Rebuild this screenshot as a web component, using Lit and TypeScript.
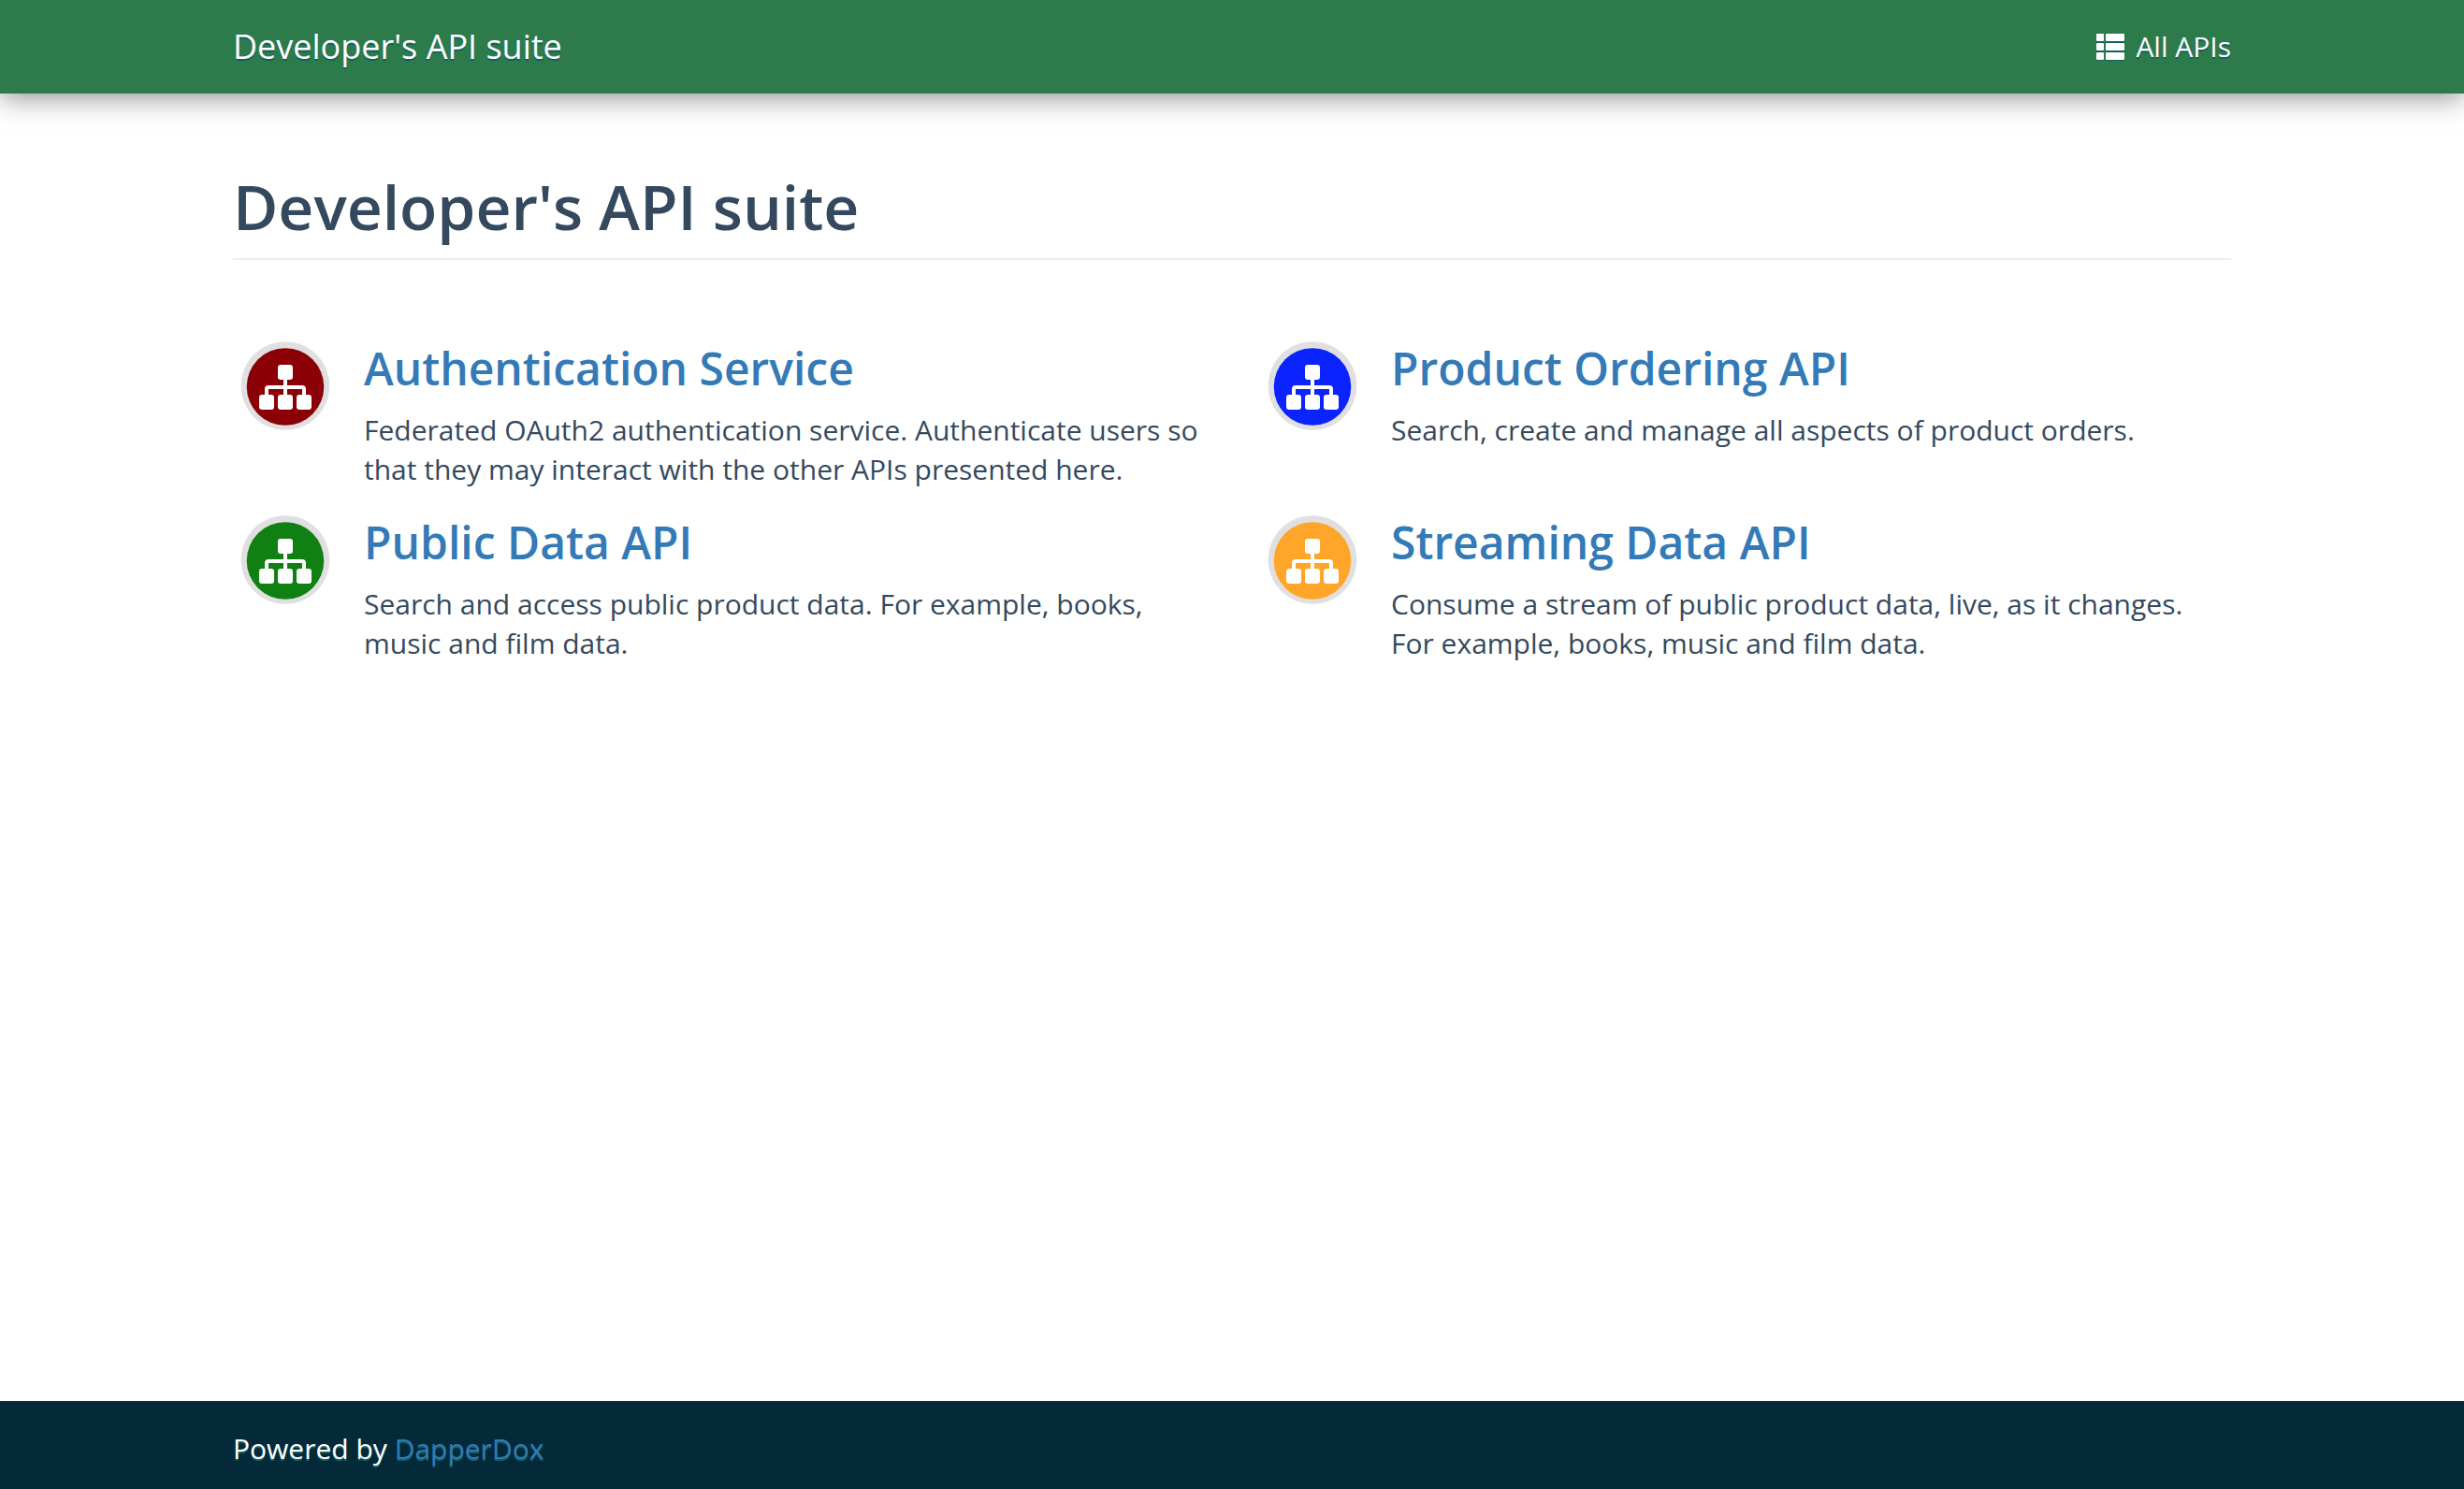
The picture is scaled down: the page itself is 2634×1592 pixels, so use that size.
import { LitElement, html, css, svg } from "lit";
import { customElement, property } from "lit/decorators.js";

interface ApiSummary {
  title: string;
  description: string;
  color: string;
}

const APIS: ApiSummary[] = [
  {
    title: "Authentication Service",
    description:
      "Federated OAuth2 authentication service. Authenticate users so that they may interact with the other APIs presented here.",
    color: "#8b0007",
  },
  {
    title: "Product Ordering API",
    description: "Search, create and manage all aspects of product orders.",
    color: "#0a23ff",
  },
  {
    title: "Public Data API",
    description: "Search and access public product data. For example, books, music and film data.",
    color: "#108012",
  },
  {
    title: "Streaming Data API",
    description:
      "Consume a stream of public product data, live, as it changes. For example, books, music and film data.",
    color: "#ffa529",
  },
];

@customElement("api-badge")
export class ApiBadge extends LitElement {
  @property() color = "#333333";

  static styles = css`
    :host {
      display: block;
    }
    .badge {
      display: block;
      width: 96px;
      height: 96px;
    }
  `;

  render() {
    return html`
      <svg class="badge" viewBox="0 0 96 96" aria-hidden="true">
        <circle cx="48" cy="47.5" r="47.3" fill="#e0e0e0" />
        <circle cx="48" cy="48.5" r="41.3" fill=${this.color} />
        ${svg`
          <g fill="#ffffff">
            <rect x="40" y="25" width="16" height="16" rx="3" />
            <rect x="20" y="57" width="16" height="16" rx="3" />
            <rect x="40" y="57" width="16" height="16" rx="3" />
            <rect x="60" y="57" width="16" height="16" rx="3" />
          </g>
          <path d="M48 40V58M28 58V51Q28 49 30 49H66Q68 49 68 51V58" fill="none" stroke="#ffffff" stroke-width="4" />
        `}
      </svg>
    `;
  }
}

@customElement("api-card")
export class ApiCard extends LitElement {
  @property({ attribute: false }) api!: ApiSummary;

  static styles = css`
    :host {
      display: block;
    }
    .card {
      display: flex;
      align-items: flex-start;
      gap: 36px;
    }
    .icon {
      flex: none;
      padding-top: 5px;
    }
    .body {
      flex: 1;
      min-width: 0;
    }
    .title {
      margin: 0 0 11px;
      font-size: 48px;
      line-height: 68px;
      font-weight: 600;
    }
    .link {
      color: #337ab7;
      text-decoration: none;
    }
    .text {
      margin: 0;
      font-size: 30px;
      line-height: 42px;
    }
  `;

  render() {
    return html`
      <article class="card">
        <api-badge class="icon" .color=${this.api.color}></api-badge>
        <div class="body">
          <h2 class="title"><a class="link" href="#">${this.api.title}</a></h2>
          <p class="text">${this.api.description}</p>
        </div>
      </article>
    `;
  }
}

@customElement("app-root")
export class AppRoot extends LitElement {
  static styles = css`
    :host {
      display: flex;
      flex-direction: column;
      min-height: 100vh;
      background: #ffffff;
      color: #34495e;
      font-family: "Open Sans", sans-serif;
      font-size: 30px;
      line-height: 42px;
    }
    .container {
      box-sizing: border-box;
      width: 100%;
      max-width: 2256px;
      margin: 0 auto;
      padding: 0 60px;
    }
    .header {
      background: #2d7a4b;
      box-shadow: 0 2px 30px rgba(0, 0, 0, 0.5);
    }
    .bar {
      display: flex;
      align-items: center;
      justify-content: space-between;
      min-height: 100px;
    }
    .brand,
    .nav-link {
      color: #ffffff;
      text-decoration: none;
      text-shadow: 0 2px 0 #106060;
    }
    .brand {
      font-size: 36px;
      line-height: 48px;
    }
    .nav-link {
      display: flex;
      align-items: center;
      gap: 12px;
    }
    .list-icon {
      width: 30px;
      height: 30px;
    }
    .main {
      flex: 1;
    }
    .heading {
      margin: 72px 0 82px;
      padding-bottom: 8px;
      border-bottom: 2px solid #eeeeee;
      font-size: 66px;
      line-height: 96px;
      font-weight: 600;
    }
    .grid {
      display: grid;
      grid-template-columns: 1fr 1fr;
      gap: 23px 72px;
      padding: 0 4px 0 8px;
    }
    .footer {
      background: #042a39;
      color: #ffffff;
      text-shadow: 0 2px 0 #106060;
    }
    .credit {
      margin: 0;
      padding: 30px 0 22px;
    }
    .credit-link {
      color: #337ab7;
      text-decoration: none;
    }
  `;

  render() {
    return html`
      <header class="header">
        <nav class="container bar">
          <a class="brand" href="#">Developer's API suite</a>
          <a class="nav-link" href="#">
            <svg class="list-icon" viewBox="0 0 30 30" aria-hidden="true">
              <g fill="#106060">
                <rect x="0" y="3" width="8" height="8" rx="1" />
                <rect x="10" y="3" width="20" height="8" rx="1" />
                <rect x="0" y="13" width="8" height="8" rx="1" />
                <rect x="10" y="13" width="20" height="8" rx="1" />
                <rect x="0" y="22" width="8" height="8" rx="1" />
                <rect x="10" y="22" width="20" height="8" rx="1" />
              </g>
              <g fill="#ffffff">
                <rect x="0" y="1" width="8" height="8" rx="1" />
                <rect x="10" y="1" width="20" height="8" rx="1" />
                <rect x="0" y="11" width="8" height="8" rx="1" />
                <rect x="10" y="11" width="20" height="8" rx="1" />
                <rect x="0" y="21" width="8" height="8" rx="1" />
                <rect x="10" y="21" width="20" height="8" rx="1" />
              </g>
            </svg>
            All APIs
          </a>
        </nav>
      </header>
      <main class="main container">
        <h1 class="heading">Developer's API suite</h1>
        <section class="grid" aria-label="APIs">
          ${APIS.map((api) => html`<api-card .api=${api}></api-card>`)}
        </section>
      </main>
      <footer class="footer">
        <div class="container">
          <p class="credit">Powered by <a class="credit-link" href="#">DapperDox</a></p>
        </div>
      </footer>
    `;
  }
}
